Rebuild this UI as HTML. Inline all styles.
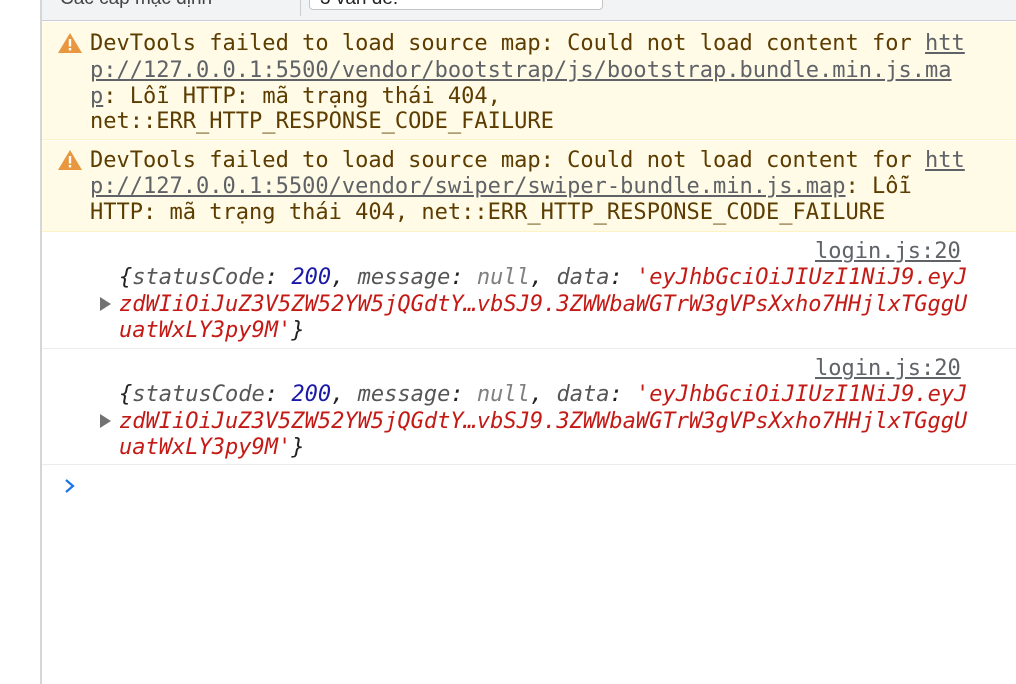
<!DOCTYPE html>
<html><head><meta charset="utf-8"><style>
*{margin:0;padding:0;box-sizing:border-box}
body{width:1016px;height:684px;overflow:hidden;background:#fff;position:relative;font-family:"DejaVu Sans Mono","Liberation Mono",monospace;font-size:22.02px}
.l{position:absolute;white-space:pre;line-height:26px;height:26px}
.w{color:#5c3c00}
.a{color:#5f6368;text-decoration:underline;text-decoration-color:#5f6368}
.k{color:#565656;font-style:italic}
.n{color:#1a1aa6;font-style:italic}
.nu{color:#808080;font-style:italic}
.s{color:#c41a16;font-style:italic}
.p{color:#222;font-style:italic}
.src{color:#5f6368;text-decoration:underline}
</style></head><body>
<div style="position:absolute;left:0;top:0;width:41px;height:684px;background:#fff"></div>
<div style="position:absolute;left:40px;top:0;width:2px;height:684px;background:#d6d6d6"></div>
<div style="position:absolute;left:42px;top:0;width:974px;height:21px;background:#f1f3f4;border-bottom:1px solid #cbcdd1"></div>
<div style="position:absolute;left:60px;top:-12px;font-family:'Liberation Sans',sans-serif;font-size:19px;color:#444">Các cấp mặc định</div>
<div style="position:absolute;left:300px;top:0;width:1px;height:16px;background:#ccc"></div>
<div style="position:absolute;left:309px;top:-6px;width:294px;height:16px;border:1px solid #c4c4c4;border-radius:4px;background:#fff"></div>
<div style="position:absolute;left:320px;top:-12px;font-family:'Liberation Sans',sans-serif;font-size:19px;color:#222">3 vấn đề:</div>

<div style="position:absolute;left:42px;top:22px;width:974px;height:118px;background:#fffbe6;border-bottom:1px solid #fff3c4"></div>
<div style="position:absolute;left:42px;top:141px;width:974px;height:91px;background:#fffbe6;border-bottom:1px solid #fff3c4"></div>

<svg style="position:absolute;left:58px;top:33px" width="24" height="20" viewBox="0 0 24 20"><path d="M12 0L24 20H0Z" fill="#e8973f"/><rect x="10.8" y="6" width="2.4" height="7.5" fill="#fff"/><rect x="10.8" y="15" width="2.4" height="2.4" fill="#fff"/></svg>
<svg style="position:absolute;left:58px;top:150px" width="24" height="20" viewBox="0 0 24 20"><path d="M12 0L24 20H0Z" fill="#e8973f"/><rect x="10.8" y="6" width="2.4" height="7.5" fill="#fff"/><rect x="10.8" y="15" width="2.4" height="2.4" fill="#fff"/></svg>

<div class="l w" style="left:90px;top:31px">DevTools failed to load source map: Could not load content for <span class="a">htt</span></div>
<div class="l w" style="left:90px;top:58px"><span class="a">p://127.0.0.1:5500/vendor/bootstrap/js/bootstrap.bundle.min.js.ma</span></div>
<div class="l w" style="left:90px;top:84px"><span class="a">p</span>: Lỗi HTTP: mã trạng thái 404,</div>
<div class="l w" style="left:90px;top:109px">net::ERR_HTTP_RESPONSE_CODE_FAILURE</div>

<div class="l w" style="left:90px;top:148px">DevTools failed to load source map: Could not load content for <span class="a">htt</span></div>
<div class="l w" style="left:90px;top:174px"><span class="a">p://127.0.0.1:5500/vendor/swiper/swiper-bundle.min.js.map</span>: Lỗi</div>
<div class="l w" style="left:90px;top:200px">HTTP: mã trạng thái 404, net::ERR_HTTP_RESPONSE_CODE_FAILURE</div>

<div style="position:absolute;left:42px;top:348px;width:974px;height:1px;background:#ececec"></div>
<div style="position:absolute;left:42px;top:464px;width:974px;height:1px;background:#ececec"></div>

<div class="l src" style="left:815px;top:239px">login.js:20</div>
<div class="l" style="left:119px;top:265px"><span class="p">{</span><span class="k">statusCode</span><span class="p">: </span><span class="n">200</span><span class="p">, </span><span class="k">message</span><span class="p">: </span><span class="nu">null</span><span class="p">, </span><span class="k">data</span><span class="p">: </span><span class="s">'eyJhbGciOiJIUzI1NiJ9.eyJ</span></div>
<div class="l s" style="left:119px;top:292px">zdWIiOiJuZ3V5ZW52YW5jQGdtY…vbSJ9.3ZWWbaWGTrW3gVPsXxho7HHjlxTGggU</div>
<div class="l" style="left:119px;top:318px"><span class="s">uatWxLY3py9M'</span><span class="p">}</span></div>
<svg style="position:absolute;left:100px;top:297px" width="11" height="14"><path d="M0 0L11 7L0 14Z" fill="#727272"/></svg>

<div class="l src" style="left:815px;top:356px">login.js:20</div>
<div class="l" style="left:119px;top:382px"><span class="p">{</span><span class="k">statusCode</span><span class="p">: </span><span class="n">200</span><span class="p">, </span><span class="k">message</span><span class="p">: </span><span class="nu">null</span><span class="p">, </span><span class="k">data</span><span class="p">: </span><span class="s">'eyJhbGciOiJIUzI1NiJ9.eyJ</span></div>
<div class="l s" style="left:119px;top:409px">zdWIiOiJuZ3V5ZW52YW5jQGdtY…vbSJ9.3ZWWbaWGTrW3gVPsXxho7HHjlxTGggU</div>
<div class="l" style="left:119px;top:435px"><span class="s">uatWxLY3py9M'</span><span class="p">}</span></div>
<svg style="position:absolute;left:100px;top:414px" width="11" height="14"><path d="M0 0L11 7L0 14Z" fill="#727272"/></svg>

<svg style="position:absolute;left:64px;top:478px" width="12" height="16"><path d="M2 2L9 8L2 14" fill="none" stroke="#1a73e8" stroke-width="2.2"/></svg>
</body></html>
